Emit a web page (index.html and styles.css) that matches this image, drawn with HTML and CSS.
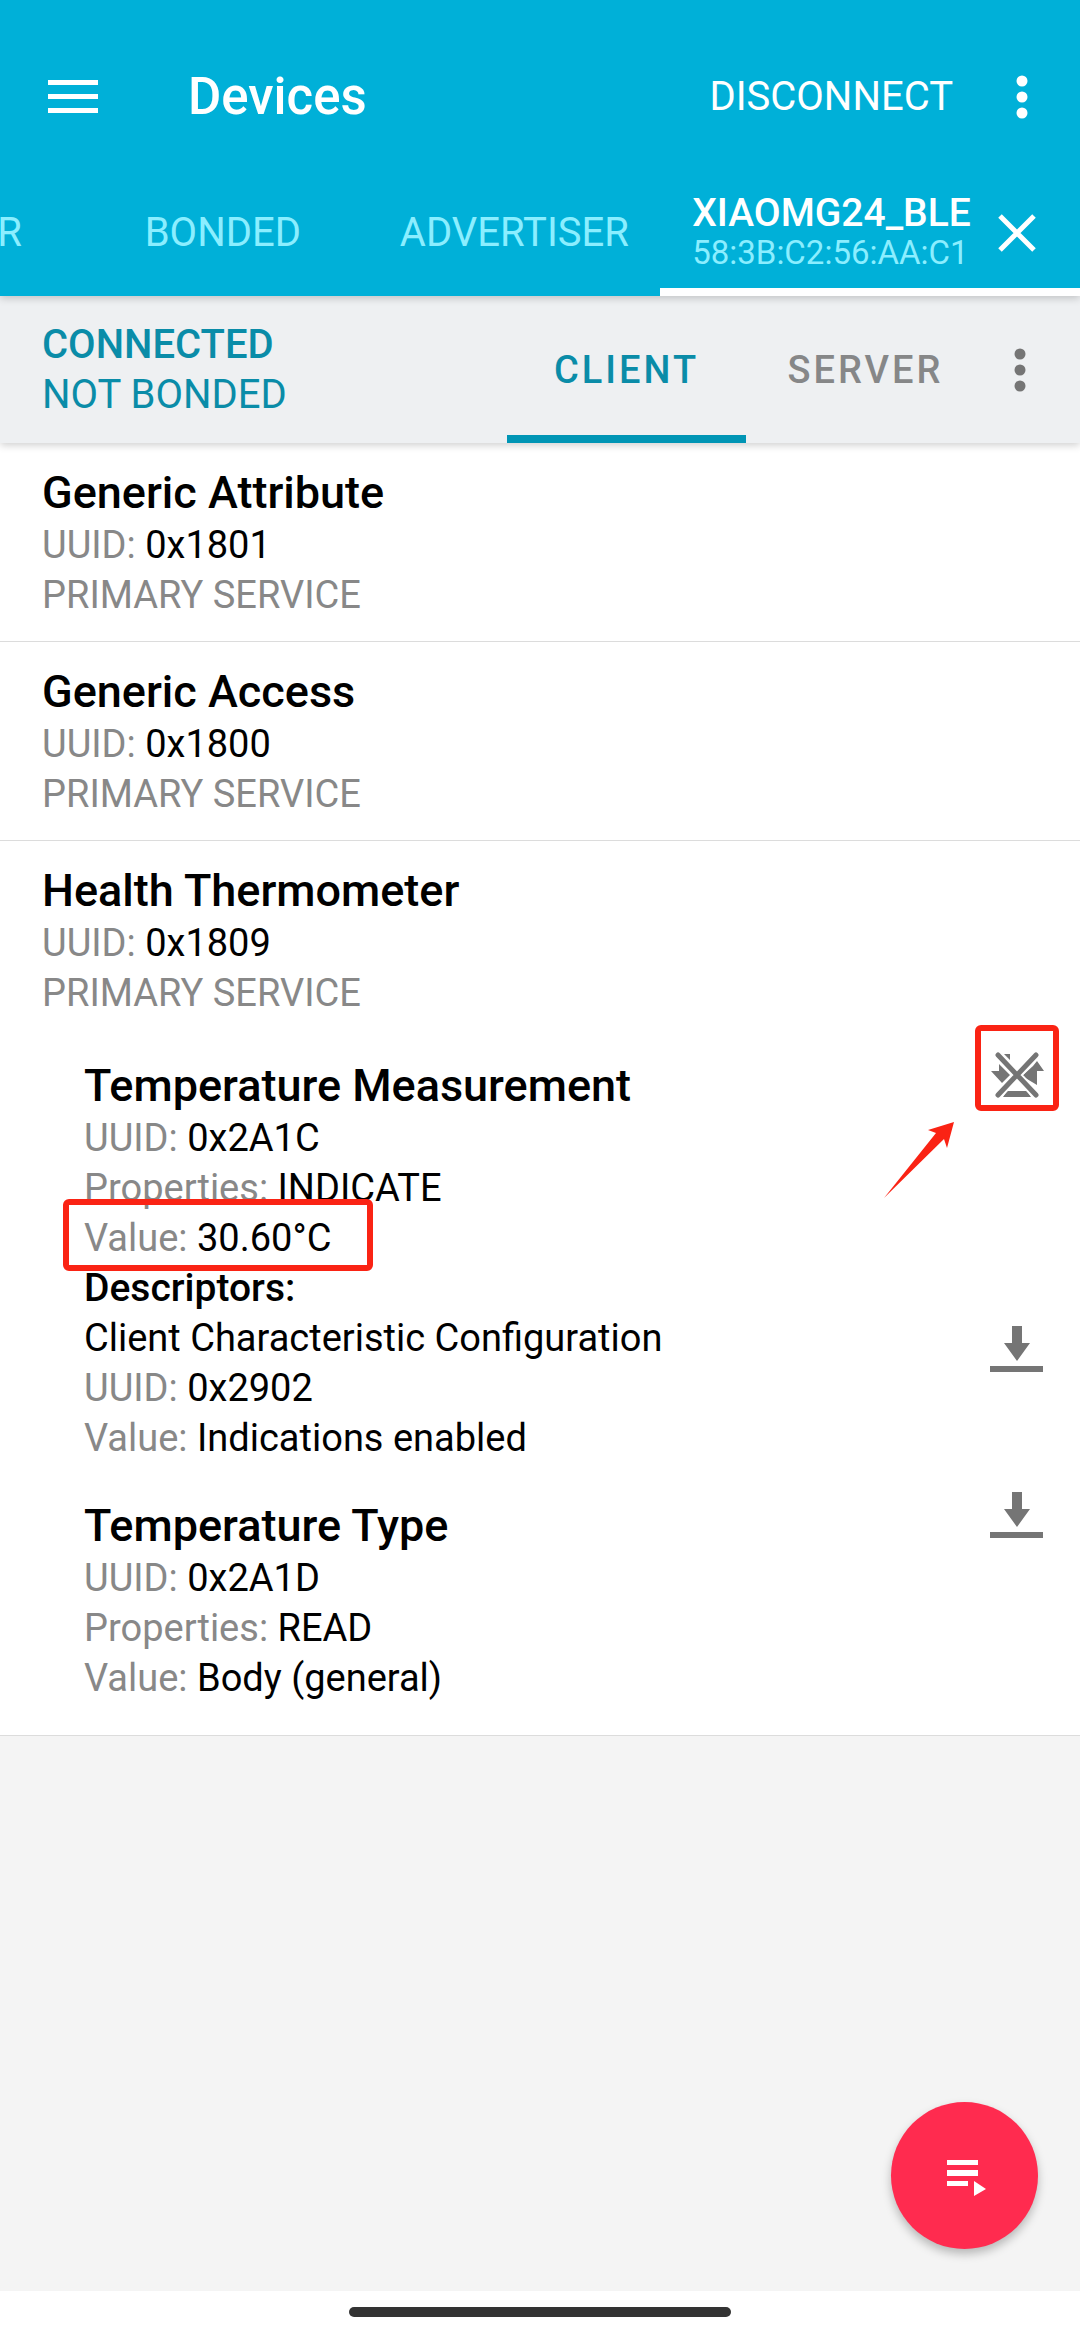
FILE: index.html
```
<!DOCTYPE html>
<html lang="en">
<head>
    <meta charset="UTF-8">
    <meta name="viewport" content="width=device-width, initial-scale=1">
    <title>Devices</title>
    <link rel="stylesheet" href="styles.css">
</head>
<body>

<header class="header">
    <div class="toolbar">
        <button class="iconBtn" aria-label="Menu">
            <svg width="50" height="34" viewBox="0 0 50 34"><path d="M0 0h50v5H0zM0 14h50v5H0zM0 28h50v5H0z"/></svg>
        </button>
        <h1>Devices</h1>
        <button class="disconnect">DISCONNECT</button>
        <button class="iconBtn more" aria-label="More options">
            <svg width="12" height="44" viewBox="0 0 12 44"><circle cx="6" cy="6" r="5.5"/><circle cx="6" cy="22" r="5.5"/><circle cx="6" cy="38" r="5.5"/></svg>
        </button>
    </div>
    <nav class="tabs">
        <a href="#scanner" class="tab scanner">SCANNER</a>
        <a href="#bonded" class="tab">BONDED</a>
        <a href="#advertiser" class="tab">ADVERTISER</a>
        <div class="tab device">
            <a href="#device">
                <span class="name">XIAOMG24_BLE</span>
                <span class="mac">58:3B:C2:56:AA:C1</span>
            </a>
            <button class="iconBtn" aria-label="Close tab">
                <svg width="38" height="38" viewBox="0 0 38 38"><path d="M2 2l34 34M36 2L2 36" fill="none" stroke="#fff" stroke-width="5"/></svg>
            </button>
        </div>
    </nav>
</header>

<div class="status">
    <div class="state">
        <strong>CONNECTED</strong>
        <span>NOT BONDED</span>
    </div>
    <nav class="modes">
        <a href="#client" class="mode active">CLIENT</a>
        <a href="#server" class="mode">SERVER</a>
    </nav>
    <button class="iconBtn more" aria-label="Connection options">
        <svg width="12" height="44" viewBox="0 0 12 44"><circle cx="6" cy="6" r="5.5"/><circle cx="6" cy="22" r="5.5"/><circle cx="6" cy="38" r="5.5"/></svg>
    </button>
</div>

<main class="main">
    <section class="service">
        <h2>Generic Attribute</h2>
        <p><span>UUID:</span> 0x1801</p>
        <p><span>PRIMARY SERVICE</span></p>
    </section>
    <section class="service">
        <h2>Generic Access</h2>
        <p><span>UUID:</span> 0x1800</p>
        <p><span>PRIMARY SERVICE</span></p>
    </section>
    <section class="service open">
        <h2>Health Thermometer</h2>
        <p><span>UUID:</span> 0x1809</p>
        <p><span>PRIMARY SERVICE</span></p>

        <div class="characteristics">
            <article class="characteristic">
                <div class="info">
                    <h3>Temperature Measurement</h3>
                    <p><span>UUID:</span> 0x2A1C</p>
                    <p><span>Properties:</span> INDICATE</p>
                    <p class="value"><span>Value:</span> 30.60°C<i class="mark"></i></p>
                    <h4>Descriptors:</h4>
                </div>
                <button class="action" aria-label="Disable indications">
                    <svg width="54" height="48" viewBox="0 0 54 48">
                        <path d="M1 20h8v-7l11 11-8 8zM14 3h6v6zM32 25l11-10 4-5 7 10h-7v14zM17 40h20l4 6H13z"/>
                        <path d="M8 4l38 40M46 4L8 44" fill="none" stroke="#fff" stroke-width="9"/>
                        <path d="M8 4l38 40M46 4L8 44" fill="none" stroke="#757575" stroke-width="5" stroke-linecap="round"/>
                    </svg>
                    <i class="mark"></i>
                    <svg class="arrow" width="70" height="76" viewBox="0 0 70 76"><path d="M70 0L63 26 60 17 0 76 52 11 44 8z"/></svg>
                </button>
            </article>
            <article class="characteristic descriptor">
                <div class="info">
                    <p>Client Characteristic Configuration</p>
                    <p><span>UUID:</span> 0x2902</p>
                    <p><span>Value:</span> Indications enabled</p>
                </div>
                <button class="action" aria-label="Read descriptor">
                    <svg width="54" height="46" viewBox="0 0 54 46"><path d="M22 0h10v17h8L27 35 14 17h8zM0 40h53v6H0z"/></svg>
                </button>
            </article>
            <article class="characteristic">
                <div class="info">
                    <h3>Temperature Type</h3>
                    <p><span>UUID:</span> 0x2A1D</p>
                    <p><span>Properties:</span> READ</p>
                    <p><span>Value:</span> Body (general)</p>
                </div>
                <button class="action" aria-label="Read characteristic">
                    <svg width="54" height="46" viewBox="0 0 54 46"><path d="M22 0h10v17h8L27 35 14 17h8zM0 40h53v6H0z"/></svg>
                </button>
            </article>
        </div>
    </section>

    <button class="fab" aria-label="Macros">
        <svg width="40" height="36" viewBox="0 0 40 36"><path d="M1 0h31v5H1zM1 10h31v6H1zM1 21h21v5H1zM28 21l12 8-12 7z"/></svg>
    </button>
</main>

<footer class="navbar"><div class="pill"></div></footer>

</body>
</html>
```
FILE: styles.css
```
* {
    padding: 0;
    margin: 0;
    box-sizing: border-box;
}
body {
    display: flex;
    flex-direction: column;
    min-height: 100vh;
    background: #fff;
    color: #000;
    font-family: Roboto, "Noto Sans", sans-serif;
    font-size: 38px;
    line-height: 50px;
}
a {
    color: inherit;
    text-decoration: none;
}
button {
    border: 0;
    background: none;
    color: inherit;
    font: inherit;
    cursor: pointer;
}
svg {
    display: block;
    fill: currentColor;
}
h1, h2, h3, h4, strong {
    font-weight: 500;
}

/* app bar */
.header {
    position: relative;
    z-index: 2;
    padding-top: 24px;
    background: #00b0d8;
    color: #fff;
    font-size: 40px;
    box-shadow: 0 2px 8px rgba(0, 0, 0, .2);
}
.toolbar {
    display: flex;
    align-items: center;
    height: 146px;
    padding: 0 23px 0 48px;
}
.toolbar h1 {
    flex: 1;
    margin-left: 90px;
    font-size: 51px;
}
.disconnect {
    margin-right: 34px;
}
.iconBtn {
    display: flex;
    align-items: center;
    justify-content: center;
    flex: none;
}
.more {
    width: 70px;
    height: 96px;
}
.tabs {
    display: flex;
    height: 126px;
    overflow: hidden;
}
.tab {
    display: flex;
    align-items: center;
    justify-content: center;
    width: 27%;
    color: #8beeff;
}
.scanner {
    justify-content: flex-end;
    width: 77px;
    padding-right: 55px;
}
.device {
    flex: 1;
    justify-content: space-between;
    padding: 8px 44px 0 32px;
    border-bottom: 8px solid #fff;
    color: #fff;
}
.device span {
    display: block;
    line-height: 40px;
}
.device .name {
    font-size: 39px;
    font-weight: 500;
}
.device .mac {
    color: #8beeff;
    font-size: 33px;
}

/* connection state */
.status {
    position: relative;
    z-index: 1;
    display: flex;
    height: 147px;
    padding: 0 25px 0 42px;
    align-items: center;
    background: #eef0f2;
    box-shadow: 0 2px 8px rgba(0, 0, 0, .2);
}
.state {
    flex: 1;
    color: #0a8ca8;
    font-size: 40px;
}
.state strong,
.state span {
    display: block;
}
.modes {
    display: flex;
    align-self: stretch;
}
.mode {
    display: flex;
    align-items: center;
    justify-content: center;
    width: 239px;
    border-top: 8px solid transparent;
    border-bottom: 8px solid transparent;
    color: #868788;
    font-weight: 500;
    letter-spacing: 3px;
}
.mode.active {
    border-bottom-color: #0095b5;
    color: #0a8ca8;
}
.status .more {
    color: #757575;
}

/* services */
.main {
    position: relative;
    flex: 1;
    background: #f4f4f4;
}
.service {
    padding: 22px 21px 21px 42px;
    border-bottom: 1px solid #dcdcdc;
    background: #fff;
}
.service.open {
    padding-bottom: 16px;
}
.service h2,
.service h3 {
    font-size: 45px;
    line-height: 55px;
}
.service h4 {
    font-size: 39px;
}
.service p span {
    color: #888;
}
.characteristics {
    padding: 21px 0 0 42px;
}
.characteristic {
    display: flex;
    align-items: flex-start;
    padding-bottom: 16px;
}
.characteristic:first-child {
    padding-bottom: 0;
}
.characteristic .info {
    flex: 1;
    padding-top: 19px;
}
.characteristic.descriptor .info {
    padding-top: 0;
}
.action {
    position: relative;
    display: flex;
    align-items: center;
    justify-content: center;
    width: 84px;
    height: 72px;
    color: #757575;
}

/* red callouts */
.mark {
    position: absolute;
    border: 6px solid #fa2314;
    border-radius: 6px;
}
.action .mark {
    top: -14px;
    right: 0;
    bottom: 0;
    left: 0;
}
.value {
    position: relative;
    width: fit-content;
}
.value .mark {
    top: -14px;
    right: -42px;
    bottom: -8px;
    left: -21px;
}
.arrow {
    position: absolute;
    top: 83px;
    right: 105px;
    fill: #fa2314;
}

.fab {
    position: absolute;
    right: 42px;
    bottom: 42px;
    display: flex;
    align-items: center;
    justify-content: center;
    width: 147px;
    height: 147px;
    padding: 4px 0 0 2px;
    border-radius: 50%;
    background: #ff2b4f;
    color: #fff;
    box-shadow: 0 5px 10px rgba(0, 0, 0, .25);
}

.navbar {
    display: flex;
    justify-content: center;
    height: 42px;
    padding-top: 16px;
}
.pill {
    width: 382px;
    height: 10px;
    border-radius: 5px;
    background: #333;
}
```
